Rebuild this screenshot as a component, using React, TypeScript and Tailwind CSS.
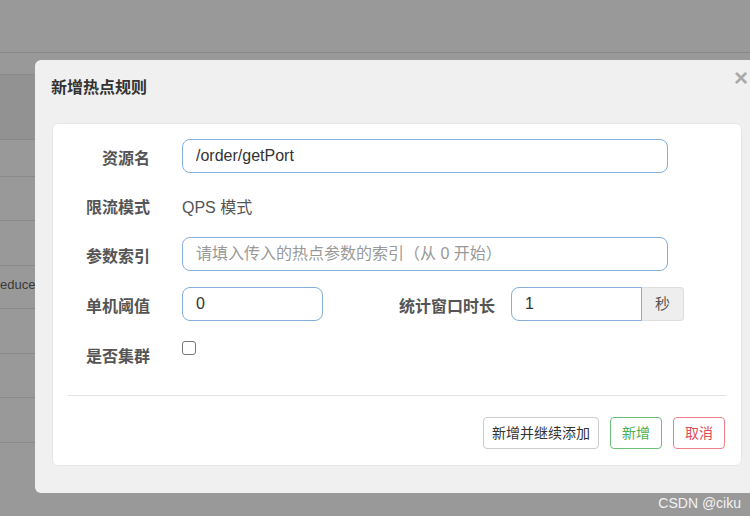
// Sentinel-style "新增热点规则" modal laid over a dimmed rule table.
const font = "font-['Liberation_Sans','Noto_Sans_CJK_SC',sans-serif]";

const bgRows = [
  { h: "h-[22px]", bg: "bg-[#999999]", text: "" },
  { h: "h-[65px]", bg: "bg-[#929292]", text: "" },
  { h: "h-[37px]", bg: "bg-[#999999]", text: "" },
  { h: "h-[44px]", bg: "bg-[#999999]", text: "" },
  { h: "h-[45px]", bg: "bg-[#999999]", text: "" },
  { h: "h-[43px]", bg: "bg-[#999999]", text: "educe" },
  { h: "h-[45px]", bg: "bg-[#999999]", text: "" },
  { h: "h-[44px]", bg: "bg-[#999999]", text: "" },
  { h: "h-[45px]", bg: "bg-[#999999]", text: "" },
];

function Label({ children, className = "" }: { children: string; className?: string }) {
  return (
    <div className={`pt-[9px] text-right text-[16px] font-bold leading-[22px] text-[#555] ${className}`}>
      {children}
    </div>
  );
}

const inputCls =
  "h-[34px] rounded-[8px] border border-[#86aedb] bg-white px-[13px] text-[16px] text-[#333] outline-none placeholder:text-[#999]";

export default function App() {
  return (
    <div className={`relative h-[516px] w-[750px] overflow-hidden bg-[#999999] ${font}`}>
      {/* page behind the backdrop */}
      <div className="h-[53px] border-b border-[#888]" />
      <div className="flex flex-col">
        {bgRows.map((r, i) => (
          <div
            key={i}
            className={`flex items-center border-b border-[#8a8a8a] ${r.h} ${r.bg} pb-[5px] text-[13px] text-[#3a3a3a]`}
          >
            {r.text}
          </div>
        ))}
      </div>

      {/* modal */}
      <div className="absolute left-[35px] top-[60px] h-[433px] w-[740px] rounded-[6px] bg-[#f0f0f0] px-[17px] pt-[17px]">
        <div className="flex items-start justify-between">
          <h3 className="ml-[-1px] text-[16px] font-bold leading-[22px] text-[#333]">新增热点规则</h3>
          <span className="mr-[10px] mt-[-11px] text-[24px] font-bold leading-[24px] text-[#aaa]">×</span>
        </div>

        <div className="mt-[24px] h-[343px] w-[690px] rounded-[6px] border border-[#e6e6e6] bg-white pt-[15px]">
          <div className="flex h-[49px] items-start">
            <Label className="w-[97px]">资源名</Label>
            <input className={`ml-[32px] w-[486px] ${inputCls}`} value="/order/getPort" readOnly />
          </div>
          <div className="flex h-[49px] items-start">
            <Label className="w-[97px]">限流模式</Label>
            <div className="ml-[32px] pt-[9px] text-[16px] leading-[22px] text-[#555]">QPS 模式</div>
          </div>
          <div className="flex h-[50px] items-start">
            <Label className="w-[97px]">参数索引</Label>
            <input
              className={`ml-[32px] w-[486px] ${inputCls}`}
              placeholder="请填入传入的热点参数的索引（从 0 开始）"
              readOnly
            />
          </div>
          <div className="flex h-[50px] items-start">
            <Label className="w-[97px]">单机阈值</Label>
            <input className={`ml-[32px] w-[141px] ${inputCls}`} value="0" readOnly />
            <Label className="w-[172px]">统计窗口时长</Label>
            <div className="ml-[16px] flex">
              <input
                className="h-[34px] w-[131px] rounded-l-[8px] border border-[#86aedb] bg-white px-[13px] text-[16px] text-[#333] outline-none"
                value="1"
                readOnly
              />
              <div className="flex h-[34px] w-[42px] items-center justify-center rounded-r-[4px] border border-l-0 border-[#ddd] bg-[#eee] text-[15px] text-[#555]">
                秒
              </div>
            </div>
          </div>
          <div className="flex h-[43px] items-start">
            <Label className="w-[97px]">是否集群</Label>
            <div className="ml-[32px] mt-[4px] h-[14px] w-[14px] rounded-[3px] border border-[#777] bg-white" />
          </div>

          <div className="mx-[15px] mt-[15px] border-t border-[#e2e2e2]" />

          <div className="mr-[16px] mt-[21px] flex justify-end gap-[11px] text-[14px]">
            <button className="h-[32px] w-[116px] rounded-[4px] border border-[#ccc] bg-white text-[#333]">
              新增并继续添加
            </button>
            <button className="h-[32px] w-[52px] rounded-[4px] border border-[#6cc07a] bg-white text-[#4cae4c]">
              新增
            </button>
            <button className="h-[32px] w-[52px] rounded-[4px] border border-[#ee7f89] bg-white text-[#e04b56]">
              取消
            </button>
          </div>
        </div>
      </div>

      {/* watermark */}
      <div className="absolute right-[9px] top-[495px] text-[14px] leading-[16px] text-[#f2f2f2]">
        CSDN @ciku
      </div>
    </div>
  );
}
